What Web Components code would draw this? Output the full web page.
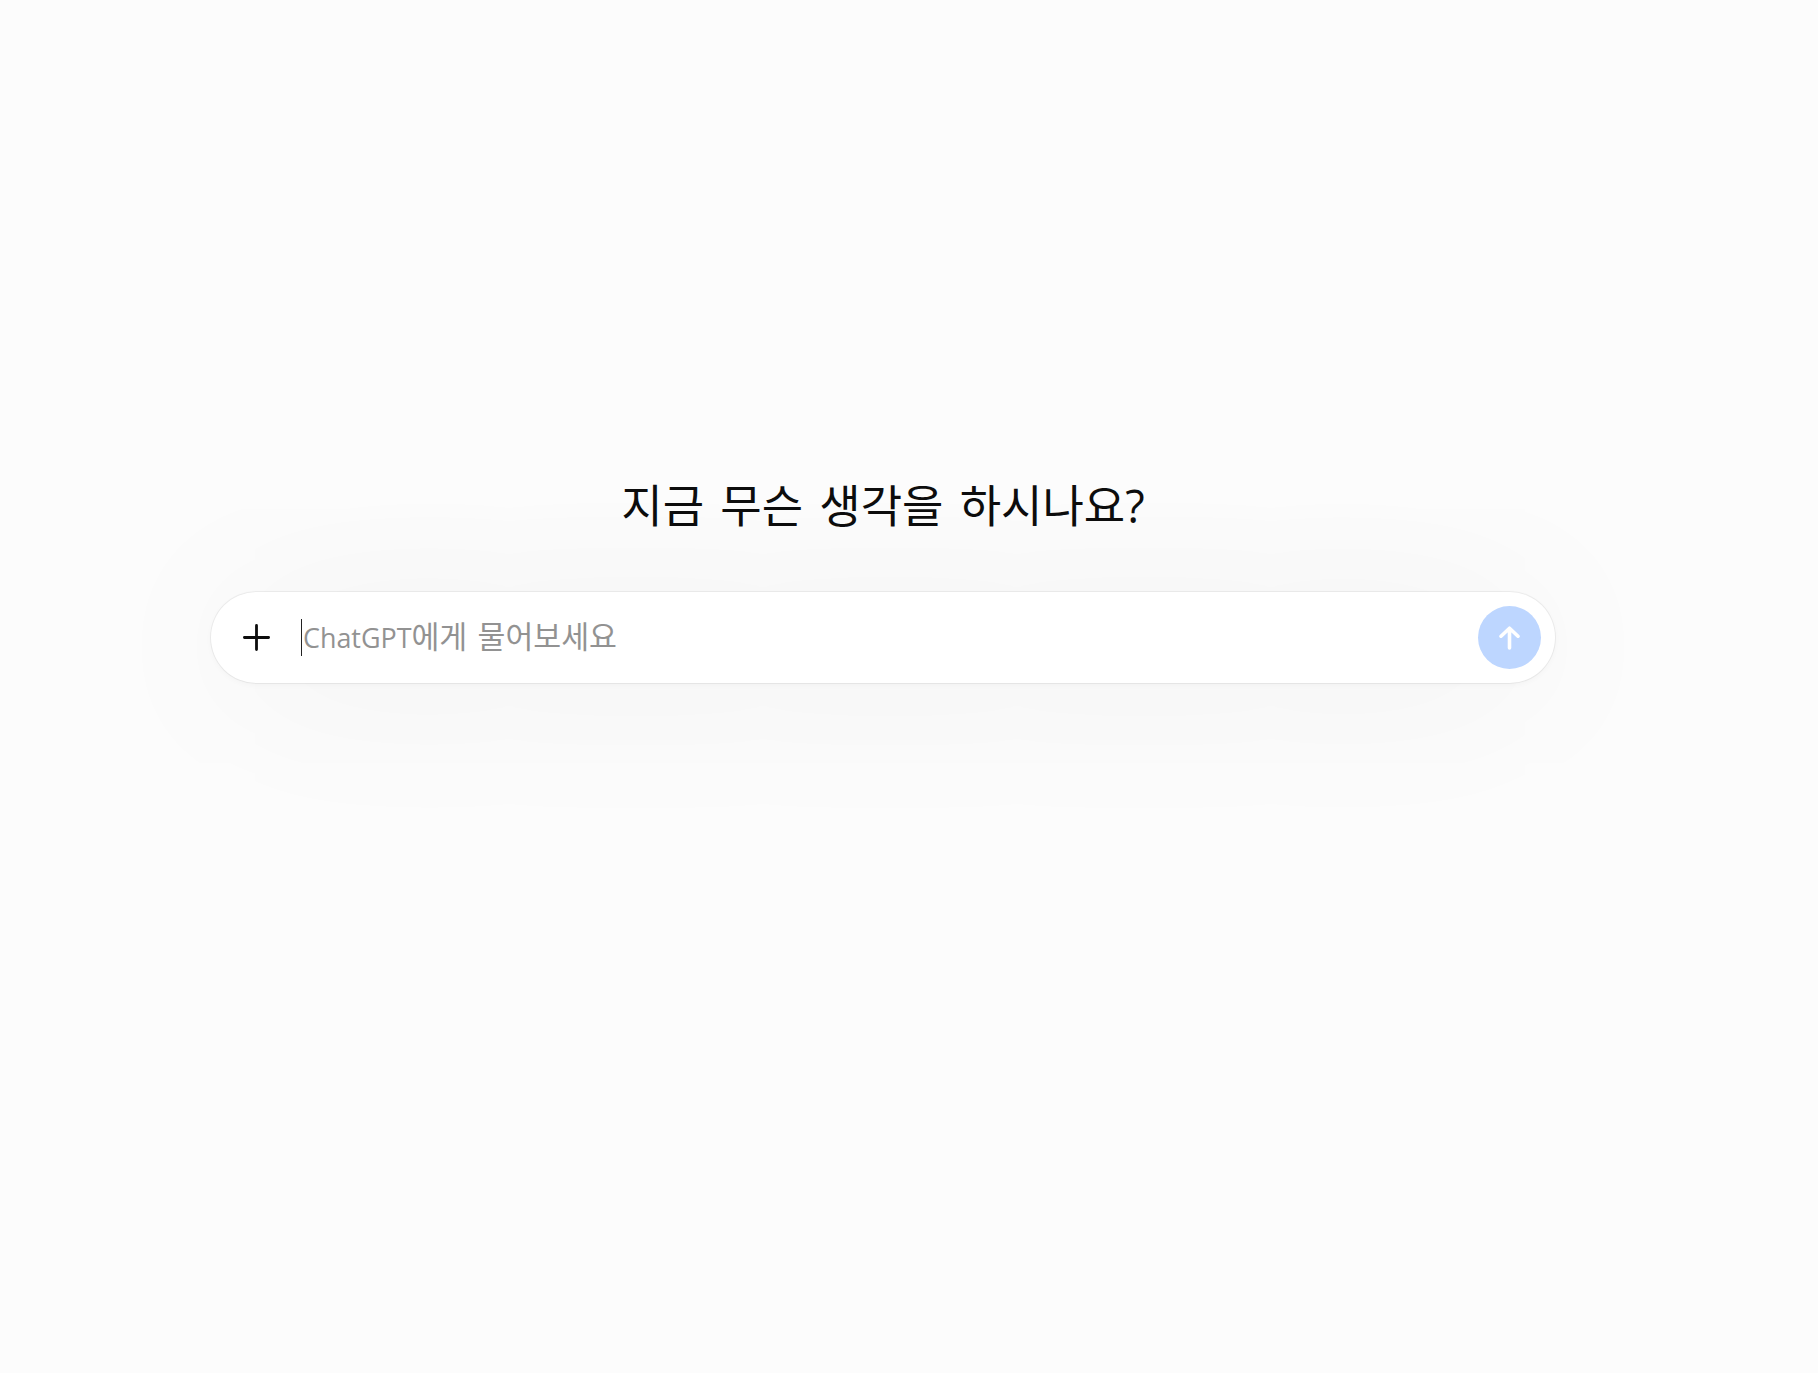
<!DOCTYPE html>
<html lang="ko"><head><meta charset="utf-8"><title>ChatGPT</title>
<style>html,body{margin:0;padding:0;background:#fcfcfc}</style></head>
<body>
<x-app>
  <x-heading>지금 무슨 생각을 하시나요?</x-heading>
  <x-composer><span class="l">ChatGPT</span>에게 물어보세요</x-composer>
</x-app>
<script>
const FONT='"Open Sans","Noto Sans CJK KR",sans-serif';
function def(name,html){customElements.define(name,class extends HTMLElement{constructor(){super();this.attachShadow({mode:'open'}).innerHTML=html;}});}
def('x-app',`<style>:host{display:flex;flex-direction:column;align-items:center;box-sizing:border-box;width:1818px;height:1373px;padding:479px 52px 0 0;background:#fcfcfc;font-family:${FONT};overflow:hidden}</style><slot></slot>`);
def('x-heading',`<style>:host{display:block;font-size:45px;line-height:54px;font-weight:400;color:#0d0d0d;margin-bottom:59px;white-space:nowrap;word-spacing:4.5px}</style><slot></slot>`);
def('x-icon-button',`<style>:host{display:flex;align-items:center;justify-content:center;flex:none;width:63px;height:63px;border-radius:50%}svg{display:block}</style><slot></slot>`);
def('x-composer',`<style>
:host{display:flex;align-items:center;box-sizing:border-box;width:1344px;height:91px;padding:0 14px 0 14px;background:#fff;border-radius:46px;box-shadow:0 0 0 1px rgba(0,0,0,.055),0 2px 6px rgba(0,0,0,.03),0 9px 180px rgba(0,0,0,.05)}
.plus{margin-right:13px}
.field{flex:1;display:flex;align-items:center;min-width:0}
.caret{width:1px;height:37px;background:#222;flex:none;margin-right:1px}
.ph{font-size:30.3px;line-height:37px;color:#929292;white-space:nowrap;position:relative;top:-1px;word-spacing:2.5px}
::slotted(.l){font-size:26.9px}
.send{background:#bdd6ff}
</style>
<x-icon-button class="plus"><svg width="27" height="27" viewBox="0 0 27 27" fill="none" stroke="#0d0d0d" stroke-width="2.8" stroke-linecap="round"><path d="M13.5 1.4V25.6M1.4 13.5H25.6"/></svg></x-icon-button>
<div class="field"><span class="caret"></span><span class="ph"><slot></slot></span></div>
<x-icon-button class="send"><svg width="21" height="24" viewBox="0 0 21 24" fill="none" stroke="#fff" stroke-width="3.6" stroke-linecap="round" stroke-linejoin="round"><path d="M10.5 22V2.2M2 10.2 10.5 2.2l8.5 8"/></svg></x-icon-button>`);
</script>
</body></html>
